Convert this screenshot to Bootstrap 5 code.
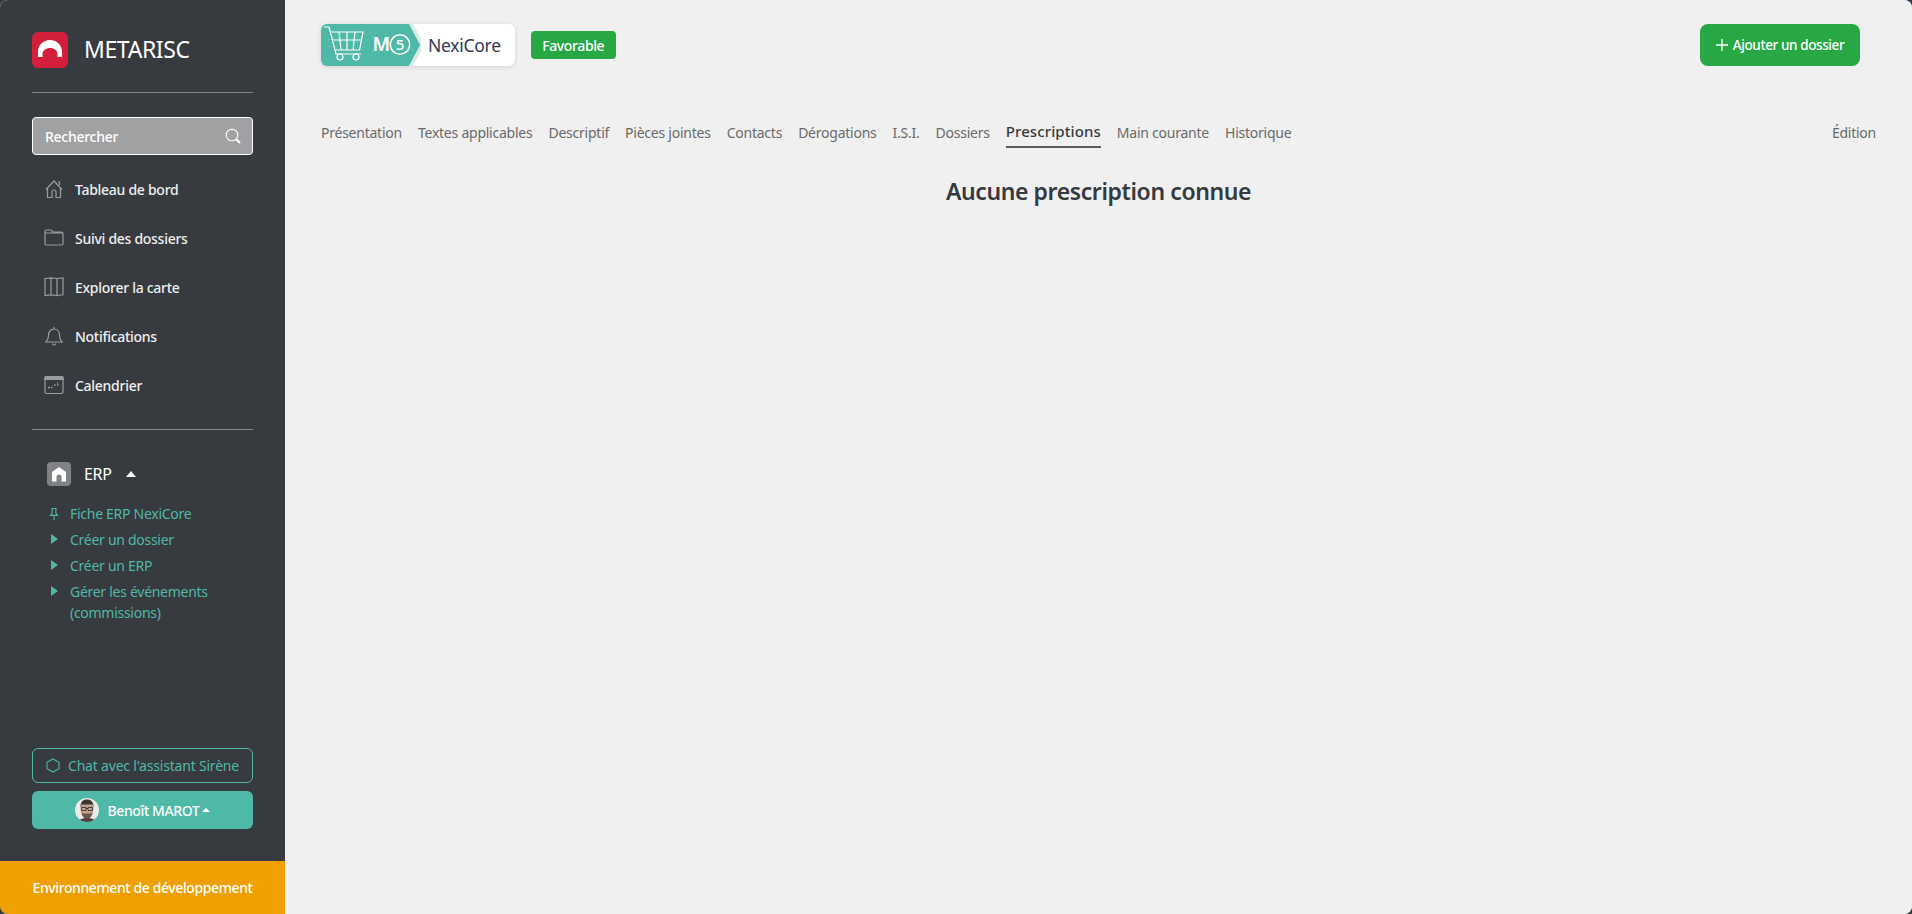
<!DOCTYPE html>
<html lang="fr">
<head>
<meta charset="utf-8">
<title>METARISC</title>
<link href="https://cdn.jsdelivr.net/npm/bootstrap@5.3.0/dist/css/bootstrap.min.css" rel="stylesheet">
<style>
html,body{height:100%;}
body{font-family:"Noto Sans","Open Sans",sans-serif;background:#343a40;font-size:14px;overflow:hidden;letter-spacing:-.28px;}
.app{height:914px;border-radius:8px;overflow:hidden;background:#f0f0f0;}
.sidebar{width:285px;flex:none;background:#373a3f;color:#fff;}
.side-inner{padding:32px 32px 0;}
.brand{height:36px;gap:16px;font-size:23px;letter-spacing:-.4px;color:#fff;line-height:36px;margin-bottom:24px;}
.brand span{margin-top:-2px;}
.brand svg{flex:none;}
.side-hr{height:1px;background:#85878a;margin:0;border:0;}
.search{height:38px;margin-top:24px;background:#a0a1a3;border:1px solid #fff;border-radius:4px;padding:0 11px 0 12px;color:#fff;font-weight:500;font-size:14px;}
.mainnav{margin:10px 0 0;}
.mainnav a{height:49px;padding-left:12px;padding-bottom:1px;gap:11px;color:#eef0f0;text-decoration:none;font-weight:500;font-size:14px;}
.mainnav svg{flex:none;}
.hr2{margin-top:19px;}
.erp-head{margin:24px 0 0 15px;height:40px;gap:13px;font-size:16px;}
.erp-ico{width:24px;height:24px;background:#808285;border-radius:4px;}
.caret-up{width:0;height:0;border-left:5.5px solid transparent;border-right:5.5px solid transparent;border-bottom:6px solid #fff;margin-left:1px;}
.sub{margin:9px 0 0 17px;color:#4fb9a8;font-size:14px;line-height:21px;}
.sub li{display:flex;gap:11px;margin-bottom:5px;}
.sub .mk{width:10px;flex:none;display:flex;justify-content:center;padding-top:4px;}
.tri{width:0;height:0;border-top:5px solid transparent;border-bottom:5px solid transparent;border-left:7px solid #4fb9a8;margin-top:1px;}
.chat{height:35px;border:1px solid #4fb9a8;border-radius:6px;color:#4fb9a8;gap:8px;font-size:14px;letter-spacing:-.2px;margin-bottom:8px;}
.user{height:38px;background:#4fb9a8;border-radius:6px;color:#fff;font-size:14px;font-weight:500;letter-spacing:-.4px;gap:9px;margin-bottom:32px;}
.user .caret-up{border-left-width:4px;border-right-width:4px;border-bottom-width:4px;margin-left:-6px;}
.env{height:53px;background:#f09f00;color:#fff;font-size:14px;font-weight:500;letter-spacing:-.4px;}
.content{min-width:0;background:#f0f0f0;padding:24px 36px 0;color:#343a40;}
.tag{height:42px;background:#fff;border-radius:6px;box-shadow:0 1px 5px rgba(0,0,0,.12);overflow:hidden;}
.tag-l{width:100px;height:42px;flex:none;}
.tag-name{font-size:17.5px;padding:0 14px 0 7px;color:#343a50;}
.fav{width:85px;height:28px;background:#28a745;color:#fff;border-radius:4px;font-size:14px;font-weight:500;letter-spacing:-.38px;margin-left:16px;}
.add{width:160px;height:42px;background:#28a745;color:#fff;border:0;border-radius:8px;font-size:13.5px;font-weight:500;letter-spacing:-.4px;gap:5px;margin-right:16px;}
.tabs{margin-top:52px;gap:16px;height:31px;letter-spacing:-.24px;}
.tabs a{color:#6a6a6a;text-decoration:none;font-size:14px;line-height:29px;height:31px;white-space:nowrap;}
.tabs a.on{color:#343a40;font-weight:500;font-size:15px;letter-spacing:.1px;border-bottom:2px solid #5c5c5c;line-height:27px;height:30px;}
.tabs .ed{margin-left:auto;}
h1.empty{font-size:23px;letter-spacing:-.4px;font-weight:600;color:#343a40;text-align:center;margin:24px 0 0;line-height:36px;}
</style>
</head>
<body>
<div class="app d-flex">
<aside class="sidebar d-flex flex-column">
<div class="side-inner flex-grow-1 d-flex flex-column">
<div class="brand d-flex align-items-center">
<svg width="36" height="36" viewBox="0 0 36 36"><rect width="36" height="36" rx="6" fill="#d21f3c"/><path d="M6 25V20C6 13 11 8 18 8S30 13 30 20V25H25.500V22C25.500 18.500 22 16 18 16S10.500 18.500 10.500 22V25z" fill="#fff"/></svg>
<span>METARISC</span></div>
<hr class="side-hr opacity-100">
<div class="search d-flex align-items-center justify-content-between"><span>Rechercher</span>
<svg width="16" height="16" viewBox="0 0 16 16" fill="none" stroke="#fff"><circle cx="7" cy="7" r="5.800" stroke-width="1.100"/><path d="M11.200 11.200 15 15" stroke-width="2"/></svg></div>
<nav class="mainnav d-flex flex-column">
<a class="d-flex align-items-center" href="#"><svg width="20" height="20" viewBox="0 0 20 20" fill="none" stroke="#9a9c9f" stroke-width="1.200"><path d="M2 10.500 10 2l8 8.500M3.500 9v9.500h4.500v-5.500a2 2 0 0 1 4 0v5.500h4.500V9M14 3h1.500v3"/></svg>Tableau de bord</a>
<a class="d-flex align-items-center" href="#"><svg width="20" height="20" viewBox="0 0 20 20" fill="none" stroke="#9a9c9f" stroke-width="1.200"><path d="M1 5V3.500A1.500 1.500 0 0 1 2.500 2h4.500l2 2h8.500A1.500 1.500 0 0 1 19 5.500v10a1.500 1.500 0 0 1-1.500 1.500h-15A1.500 1.500 0 0 1 1 15.500V5h18"/></svg>Suivi des dossiers</a>
<a class="d-flex align-items-center" href="#"><svg width="20" height="20" viewBox="0 0 20 20" fill="none" stroke="#9a9c9f" stroke-width="1.200"><path d="M1 1.500 7 .8l6 .7 6-.7v17l-6 .7-6-.7-6 .7zM7 .8v17M13 1.500v17.700"/></svg>Explorer la carte</a>
<a class="d-flex align-items-center" href="#"><svg width="20" height="20" viewBox="0 0 20 20" fill="none" stroke="#9a9c9f" stroke-width="1.200"><path d="M2 16c1.500-1.500 2.500-3 2.500-6.500C4.500 5.500 7 3 10 3s5.500 2.500 5.500 6.500c0 3.500 1 5 2.500 6.500zM10 1v2M8.500 17.500a1.500 1.500 0 0 0 3 0"/></svg>Notifications</a>
<a class="d-flex align-items-center" href="#"><svg width="20" height="20" viewBox="0 0 20 20" fill="none" stroke="#9a9c9f" stroke-width="1.200"><rect x="1" y="1.500" width="18" height="17" rx="1.500"/><path d="M1 2h18v2.500H1z" fill="#9a9c9f"/><path d="M4 12.500h2M7 12.500h1.500M10 10h1.500M13 10h1.500M13 8h1" stroke-width="1.400"/></svg>Calendrier</a>
</nav>
<hr class="side-hr hr2 opacity-100">
<div class="erp-head d-flex align-items-center"><span class="erp-ico d-flex align-items-center justify-content-center"><svg width="16" height="16" viewBox="0 0 16 16"><path d="M8 1 15 6v9.500h-4.500V11a2.500 2.500 0 0 0-5 0v4.500H1V6z" fill="#fff"/></svg></span><span>ERP</span><span class="caret-up"></span></div>
<ul class="sub list-unstyled">
<li><span class="mk"><svg width="11" height="14" viewBox="0 0 11 14" fill="none" stroke="#4fb9a8" stroke-width="1.200"><path d="M2.500 1h6M3.500 1v5L1.500 8.500h8L7.500 6V1M5.500 8.500V14"/></svg></span><span>Fiche ERP NexiCore</span></li>
<li><span class="mk"><span class="tri"></span></span><span>Créer un dossier</span></li>
<li><span class="mk"><span class="tri"></span></span><span>Créer un ERP</span></li>
<li><span class="mk"><span class="tri"></span></span><span>Gérer les événements<br>(commissions)</span></li>
</ul>
<div class="mt-auto">
<div class="chat d-flex align-items-center justify-content-center"><svg width="14" height="15" viewBox="0 0 14 15" fill="none" stroke="#4fb9a8" stroke-width="1.100"><path d="M7 1 13 4.300v6.400L7 14 1 10.700V4.300z"/></svg><span>Chat avec l'assistant Sirène</span></div>
<div class="user d-flex align-items-center justify-content-center">
<svg width="24" height="24" viewBox="0 0 24 24"><defs><clipPath id="c"><circle cx="12" cy="12" r="12"/></clipPath></defs><g clip-path="url(#c)"><rect width="24" height="24" fill="#ecebe8"/><path d="M3 24c1-3 5-4 9-4s8 1 9 4z" fill="#4a4341"/><ellipse cx="12" cy="11.500" rx="6.500" ry="8.500" fill="#c9a08c"/><path d="M5.500 10C5 4 8 1.500 12 1.500S19 4 18.500 10l-1-3.500H6.500z" fill="#3b332e"/><path d="M6.500 15c1 4.500 3.500 5.500 5.500 5.500s4.500-1 5.500-5.500l-2 .5H8.500z" fill="#6b574c"/><path d="M6.500 9.500h4.500v3H6.500zM13 9.500h4.500v3H13zM11 10.500h2" fill="none" stroke="#2a2a2a" stroke-width=".8"/></g></svg>
<span>Benoît MAROT</span><span class="caret-up"></span></div>
</div>
</div>
<div class="env d-flex align-items-center justify-content-center">Environnement de développement</div>
</aside>
<main class="content flex-grow-1">
<div class="d-flex align-items-center justify-content-between">
<div class="d-flex align-items-center">
<div class="tag d-flex align-items-center">
<svg class="tag-l" viewBox="0 0 100 42"><path d="M0 0H89L100 21 89 42H0z" fill="#d3ece8" transform="translate(3)"/><path d="M0 0H88L99 21 88 42H0z" fill="#4fb9a8"/><g fill="none" stroke="#fff" stroke-width="1.200"><path d="M3 3h5l7 27h25"/><path d="M9.500 8H42l-3.500 18H14M18 8l2 18M26 8v18M34 8l-2 18M11.500 16h29"/><circle cx="19" cy="33" r="3"/><circle cx="35" cy="33" r="3"/></g><text x="51.500" y="27" fill="#fff" font-size="19" font-weight="600" letter-spacing="0" font-family="Noto Sans,sans-serif">M</text><circle cx="79" cy="20.500" r="9.700" fill="none" stroke="#fff" stroke-width="1.500"/><text x="79" y="26" fill="#fff" font-size="15" font-weight="500" text-anchor="middle" letter-spacing="0" font-family="Noto Sans,sans-serif">5</text></svg>
<span class="tag-name">NexiCore</span></div>
<span class="fav d-flex align-items-center justify-content-center">Favorable</span>
</div>
<button class="add d-flex align-items-center justify-content-center" type="button"><svg width="12" height="12" viewBox="0 0 12 12" stroke="#fff" stroke-width="1.300"><path d="M6 0v12M0 6h12"/></svg>Ajouter un dossier</button>
</div>
<nav class="tabs d-flex align-items-start">
<a href="#">Présentation</a><a href="#">Textes applicables</a><a href="#">Descriptif</a><a href="#">Pièces jointes</a><a href="#">Contacts</a><a href="#">Dérogations</a><a href="#">I.S.I.</a><a href="#">Dossiers</a><a class="on" href="#">Prescriptions</a><a href="#">Main courante</a><a href="#">Historique</a><a class="ed" href="#">Édition</a>
</nav>
<h1 class="empty">Aucune prescription connue</h1>
</main>
</div>
<script src="https://cdn.jsdelivr.net/npm/bootstrap@5.3.0/dist/js/bootstrap.bundle.min.js"></script>
</body>
</html>
